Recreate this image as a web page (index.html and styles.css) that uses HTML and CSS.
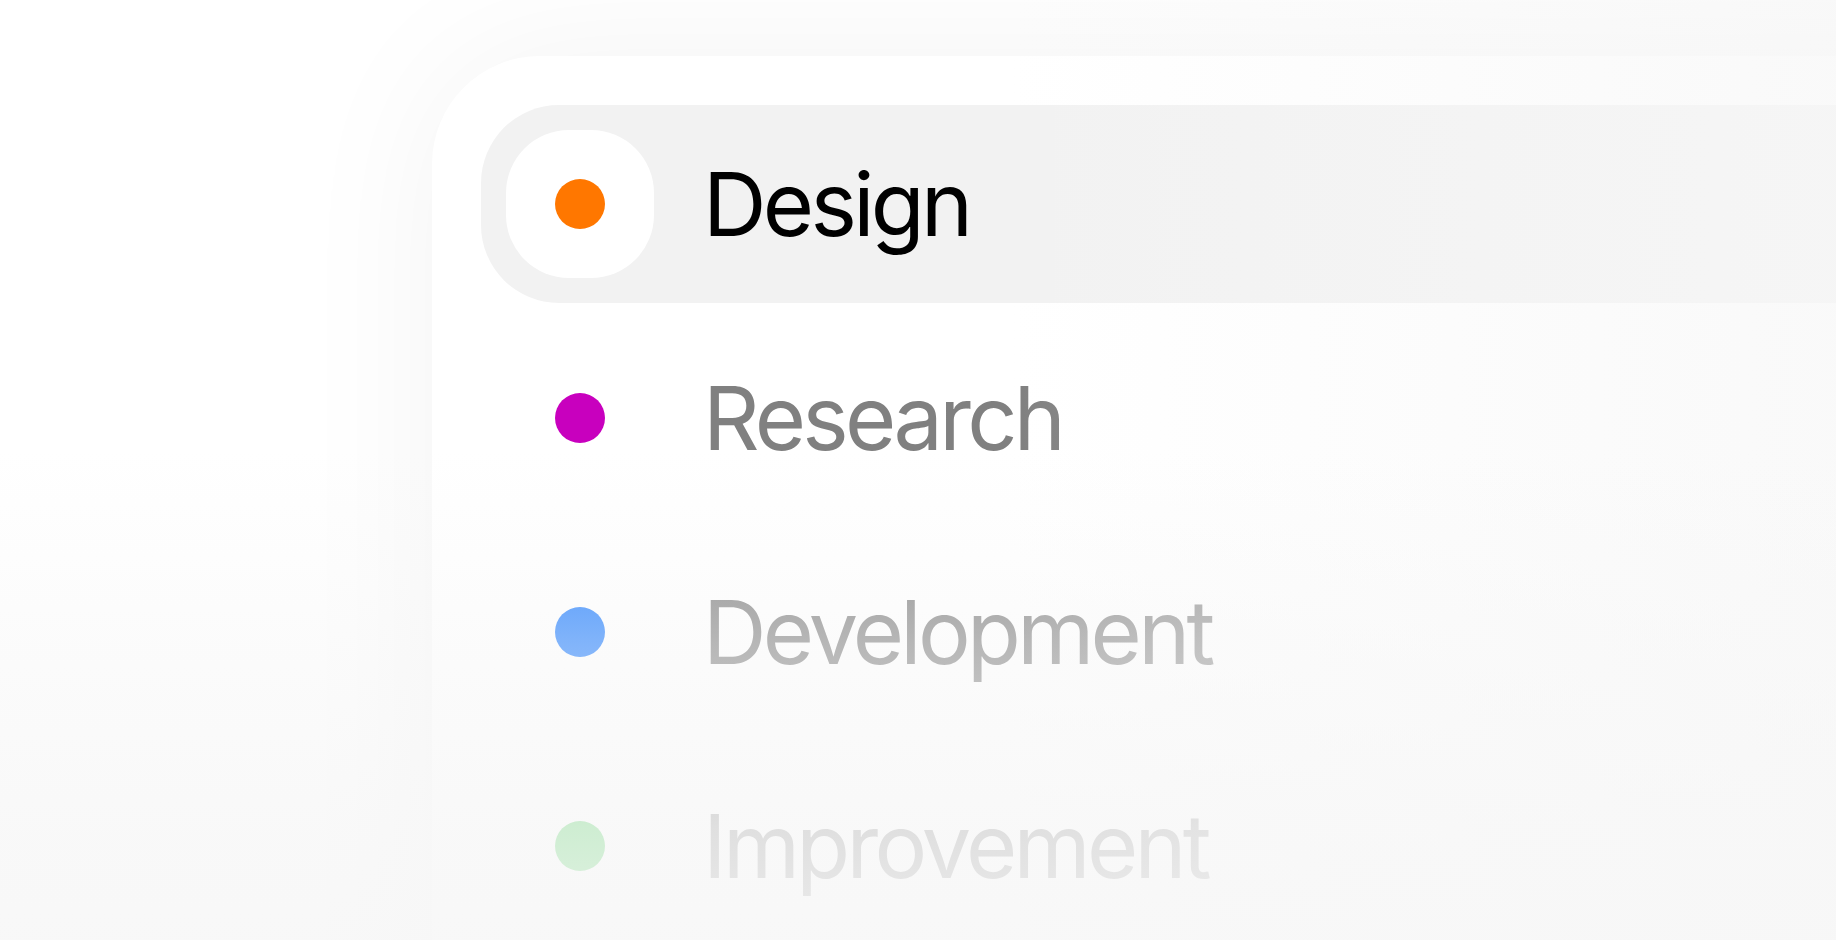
FILE: index.html
```html
<!DOCTYPE html>
<html lang="en">
<head>
    <meta charset="UTF-8">
    <meta name="viewport" content="width=device-width, initial-scale=1.0">
    <title>Stages</title>
    <link rel="stylesheet" href="styles.css">
</head>
<body>
    <main class="stage">
        <section class="card">
            <ul class="step-list">
                <li class="step active">
                    <span class="step-icon"><span class="dot dot-design"></span></span>
                    <span class="step-name">Design</span>
                </li>
                <li class="step">
                    <span class="step-icon"><span class="dot dot-research"></span></span>
                    <span class="step-name">Research</span>
                </li>
                <li class="step">
                    <span class="step-icon"><span class="dot dot-development"></span></span>
                    <span class="step-name">Development</span>
                </li>
                <li class="step">
                    <span class="step-icon"><span class="dot dot-improvement"></span></span>
                    <span class="step-name">Improvement</span>
                </li>
            </ul>
        </section>
        <div class="fade"></div>
    </main>
</body>
</html>
```

FILE: styles.css
```css
html, body {
  margin: 0;
  height: 100%;
}
body {
  background: #fff;
  overflow: hidden;
  font-family: Inter, "Noto Sans", sans-serif;
}
.stage {
  position: relative;
  height: 940px;
  padding: 56px 0 0 432px;
  box-sizing: border-box;
  overflow: hidden;
}
.card {
  margin-right: -300px;
  padding: 49px 0 0 49px;
  min-height: 1100px;
  background: #fff;
  border-radius: 108px 0 0 0;
  box-shadow: 0 0 150px rgba(0, 0, 0, 0.05);
}
.step-list {
  display: flex;
  flex-direction: column;
  gap: 16px;
  margin: 0;
  padding: 0;
  list-style: none;
}
.step {
  display: flex;
  align-items: center;
  height: 198px;
  padding-left: 25px;
  border-radius: 78px 0 0 78px;
}
.step.active {
  background: #f2f2f2;
}
.step-icon {
  display: flex;
  align-items: center;
  justify-content: center;
  width: 148px;
  height: 148px;
  border-radius: 63px;
  flex-shrink: 0;
}
.step.active .step-icon {
  background: #fff;
}
.dot {
  width: 50px;
  height: 50px;
  border-radius: 50%;
}
.dot-design { background: #ff7700; }
.dot-research { background: #c800be; }
.dot-development { background: #1d7bfd; }
.dot-improvement { background: #2cc63e; }
.step-name {
  margin-left: 49px;
  font-size: 88px;
  line-height: 1;
  letter-spacing: -0.042em;
  color: #808080;
}
.step.active .step-name {
  color: #000;
}
.fade {
  position: absolute;
  inset: 0;
  pointer-events: none;
  background:
    linear-gradient(to bottom, rgba(247, 247, 247, 0) 0, rgba(247, 247, 247, 0) 48%, rgba(247, 247, 247, 0.45) 68%, rgba(247, 247, 247, 0.8) 88%, rgba(247, 247, 247, 0.9) 100%),
    linear-gradient(to right, rgba(247, 247, 247, 0) 0, rgba(247, 247, 247, 0) 55%, rgba(247, 247, 247, 0.7) 100%);
}
```
